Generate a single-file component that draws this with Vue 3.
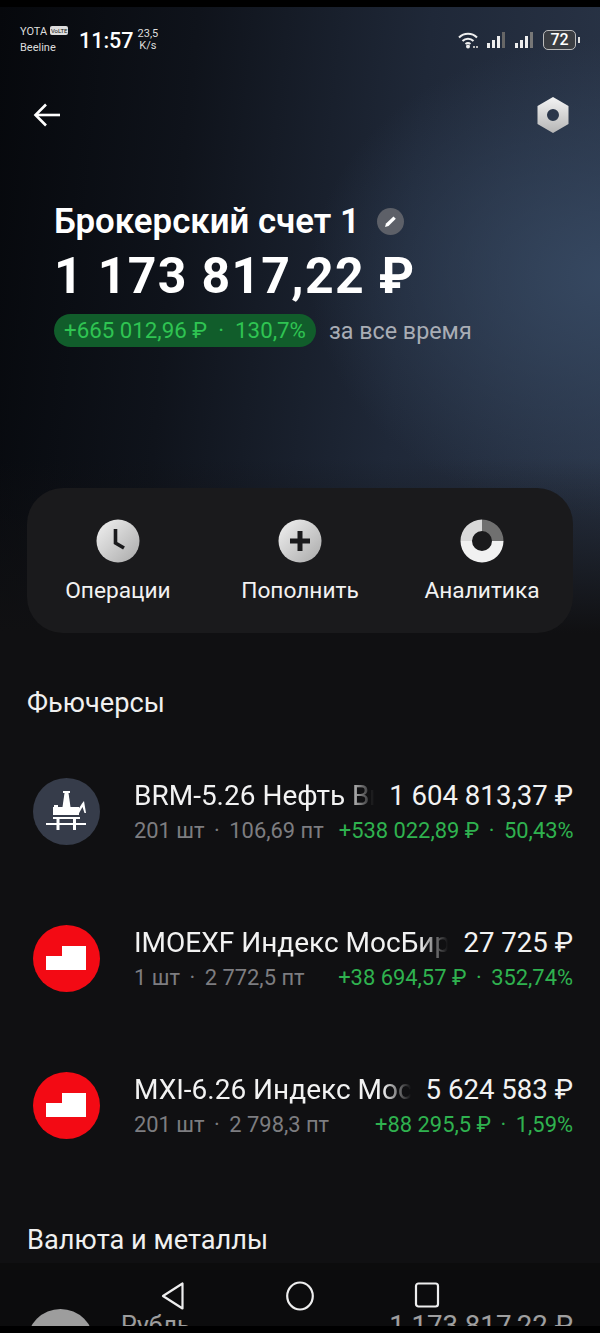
<script setup>
const actions = [
  { id: 'ops', label: 'Операции' },
  { id: 'add', label: 'Пополнить' },
  { id: 'stats', label: 'Аналитика' }
]

const futures = [
  { id: 'brm', logo: 'oil', name: 'BRM-5.26 Нефть Brent', price: '1 604 813,37 ₽', qty: '201 шт', pt: '106,69 пт', gain: '+538 022,89 ₽', pct: '50,43%' },
  { id: 'imo', logo: 'moex', name: 'IMOEXF Индекс МосБиржи', price: '27 725 ₽', qty: '1 шт', pt: '2 772,5 пт', gain: '+38 694,57 ₽', pct: '352,74%' },
  { id: 'mxi', logo: 'moex', name: 'MXI-6.26 Индекс МосБиржи', price: '5 624 583 ₽', qty: '201 шт', pt: '2 798,3 пт', gain: '+88 295,5 ₽', pct: '1,59%' }
]
</script>

<template>
  <div class="screen">
    <div class="hero">
      <div class="status">
        <div class="carriers">
          <div class="carrier-top">YOTA <span class="volte">VoLTE</span></div>
          <div>Beeline</div>
        </div>
        <span class="clock">11:57</span>
        <div class="speed"><span>23,5</span><span>K/s</span></div>
        <div class="status-right">
          <svg width="24" height="20" viewBox="0 0 24 20" fill="none" stroke="#eee" stroke-width="2">
            <path d="M2 7.500C7 2.500 15 2.500 20 7.500" />
            <path d="M5.500 11C8.500 8 13.500 8 16.500 11" />
            <path d="M8.500 14C10 12.800 12 12.800 13.500 14" />
            <circle cx="11" cy="16.500" r="2" fill="#eee" stroke="none" />
            <rect x="16" y="16" width="2" height="2" fill="#bbb" stroke="none" />
            <rect x="19" y="16" width="2" height="2" fill="#bbb" stroke="none" />
          </svg>
          <svg class="bars" width="22" height="18" viewBox="0 0 22 18">
            <rect x="0" y="12" width="3" height="5" fill="#eee" />
            <rect x="5" y="9" width="3" height="8" fill="#eee" />
            <rect x="10" y="5" width="3" height="12" fill="#eee" />
            <rect x="15" y="1" width="3" height="16" fill="#666" />
          </svg>
          <svg class="bars" width="22" height="18" viewBox="0 0 22 18">
            <rect x="0" y="12" width="3" height="5" fill="#eee" />
            <rect x="5" y="9" width="3" height="8" fill="#eee" />
            <rect x="10" y="5" width="3" height="12" fill="#eee" />
            <rect x="15" y="1" width="3" height="16" fill="#777" />
          </svg>
          <div class="battery"><span>72</span></div>
          <i class="battery-tip"></i>
        </div>
      </div>

      <div class="topbar">
        <svg width="30" height="30" viewBox="0 0 30 30" fill="none" stroke="#fff" stroke-width="2.600">
          <path d="M30 15H6" />
          <path d="M16 4.500L5.500 15L16 25.500" />
        </svg>
        <svg width="34" height="38" viewBox="0 0 34 38">
          <defs>
            <linearGradient id="nut" x1="0" y1="0" x2="0" y2="1">
              <stop offset="0" stop-color="#f4f4f4" />
              <stop offset="1" stop-color="#b5b5b5" />
            </linearGradient>
          </defs>
          <path fill="url(#nut)" fill-rule="evenodd" d="M17 1L32.500 10V28L17 37L1.500 28V10ZM17 13A6 6 0 1 0 17 25A6 6 0 1 0 17 13Z" />
        </svg>
      </div>

      <div class="account">
        <div class="account-name">
          <span>Брокерский счет 1</span>
          <svg width="27" height="27" viewBox="0 0 27 27">
            <circle cx="13.500" cy="13.500" r="13.500" fill="#5d6068" />
            <path d="M8 19L9 15.500L16.500 8.500L18.800 10.800L11.500 18Z" fill="#fff" />
          </svg>
        </div>
        <div class="account-total">1 173 817,22 ₽</div>
        <div class="account-gain">
          <span class="gain-pill">+665 012,96 ₽ &nbsp;·&nbsp; 130,7%</span>
          <span class="gain-period">за все время</span>
        </div>
      </div>

      <div class="actions">
        <div v-for="action in actions" :key="action.id" class="action">
          <svg v-if="action.id === 'ops'" width="44" height="44" viewBox="0 0 44 44">
            <defs>
              <linearGradient id="disc" x1="0" y1="0" x2="1" y2="1">
                <stop offset="0" stop-color="#f2f2f2" />
                <stop offset="1" stop-color="#a9a9a9" />
              </linearGradient>
            </defs>
            <circle cx="22" cy="22" r="21.500" fill="url(#disc)" />
            <path d="M19.500 10V24L28 29" fill="none" stroke="#1a1a1c" stroke-width="3.600" />
          </svg>
          <svg v-else-if="action.id === 'add'" width="44" height="44" viewBox="0 0 44 44">
            <circle cx="22" cy="22" r="21.500" fill="url(#disc)" />
            <path d="M22 12V32M12 22H32" fill="none" stroke="#1a1a1c" stroke-width="5" />
          </svg>
          <svg v-else width="44" height="44" viewBox="0 0 44 44">
            <path d="M22 0.500A21.500 21.500 0 0 1 43.500 22H32A10 10 0 0 0 22 12Z" fill="#707070" />
            <path d="M22 0.500V12A10 10 0 0 0 12 22H0.500A21.500 21.500 0 0 1 22 0.500Z" fill="#d9d9d9" />
            <path d="M0.500 22H12A10 10 0 0 0 32 22H43.500A21.500 21.500 0 0 1 0.500 22Z" fill="#f1f1f1" />
          </svg>
          <span>{{ action.label }}</span>
        </div>
      </div>
    </div>

    <h2 class="section-title futures-title">Фьючерсы</h2>
    <div class="list">
      <div v-for="item in futures" :key="item.id" class="row">
        <svg v-if="item.logo === 'oil'" class="logo" width="67" height="67" viewBox="0 0 67 67">
          <circle cx="33.500" cy="33.500" r="33.500" fill="#363c4a" />
          <g fill="#fff">
            <rect x="30" y="13" width="7" height="2" />
            <path d="M31.500 15H35.500L37.500 29H29.500Z" />
            <rect x="20" y="29" width="26" height="8" />
            <rect x="21" y="27" width="4" height="2" />
            <path d="M43 35L49 25.500L51 23L53 35H51.500L49.500 29L45 37Z" />
            <rect x="13" y="45" width="40" height="2" />
            <rect x="23.500" y="40" width="3" height="12" />
            <rect x="40" y="40" width="3" height="12" />
            <rect x="20" y="39" width="27" height="2" />
          </g>
        </svg>
        <svg v-else class="logo" width="67" height="67" viewBox="0 0 67 67">
          <circle cx="33.500" cy="33.500" r="33.500" fill="#f30a14" />
          <path d="M13 31H29V21H53V45H13Z" fill="#fff" />
        </svg>
        <div class="row-body">
          <div class="row-line">
            <div class="row-name">{{ item.name }}</div>
            <div class="row-price">{{ item.price }}</div>
          </div>
          <div class="row-line sub">
            <div class="row-qty">{{ item.qty }}<span class="dot">·</span>{{ item.pt }}</div>
            <div class="row-gain">{{ item.gain }}<span class="dot">·</span>{{ item.pct }}</div>
          </div>
        </div>
      </div>
    </div>

    <h2 class="section-title metals-title">Валюта и металлы</h2>
    <div class="row rub-row">
      <div class="rub-logo"></div>
      <div class="row-body rub-body">
        <div class="row-line">
          <div class="row-name rub-name">Рубль</div>
          <div class="row-price rub-price">1 173 817,22 ₽</div>
        </div>
      </div>
    </div>

    <div class="navbar">
      <svg width="26" height="30" viewBox="0 0 26 30" fill="none" stroke="#eee" stroke-width="2.200" stroke-linejoin="round">
        <path d="M22.500 2.500V27.500L3 15Z" />
      </svg>
      <svg width="30" height="30" viewBox="0 0 30 30" fill="none" stroke="#eee" stroke-width="2.200">
        <ellipse cx="15" cy="15" rx="12.800" ry="13.500" />
      </svg>
      <svg width="26" height="28" viewBox="0 0 26 28" fill="none" stroke="#eee" stroke-width="2.200">
        <rect x="2" y="2.500" width="22" height="23" rx="2.500" />
      </svg>
    </div>
    <div class="bottom-strip"></div>
  </div>
</template>

<style scoped>
.screen {
  position: relative;
  width: 600px;
  height: 1333px;
  overflow: hidden;
  background: #101012;
  color: #fff;
  font-family: Roboto, "Noto Sans", sans-serif;
}

.hero {
  border-top: 7px solid #000;
  background:
    linear-gradient(180deg, rgba(16, 16, 18, 0) 72%, #101012 100%),
    radial-gradient(ellipse 300px 240px at 610px 270px, #364861 0%, rgba(54, 72, 97, 0) 100%),
    linear-gradient(96deg, #06080c 0%, #0f131b 30%, #1f2838 65%, #2a3548 100%);
}

.status {
  display: flex;
  align-items: center;
  height: 66px;
  padding: 0 20px;
}

.carriers {
  font-size: 11px;
  line-height: 16px;
  color: #ddd;
  width: 59px;
}

.carrier-top {
  white-space: nowrap;
}

.volte {
  display: inline-block;
  font-size: 6px;
  line-height: 9px;
  padding: 0 1px;
  background: #ddd;
  color: #111;
  border-radius: 2px;
  vertical-align: 2px;
}

.clock {
  font-size: 21.500px;
  font-weight: 500;
}

.speed {
  display: flex;
  flex-direction: column;
  margin-left: 4px;
  font-size: 11px;
  line-height: 12px;
  text-align: center;
  color: #ddd;
}

.status-right {
  display: flex;
  align-items: center;
  margin-left: auto;
  gap: 6px;
}

.battery {
  width: 33px;
  height: 20px;
  box-sizing: border-box;
  border: 1.500px solid #bbb;
  border-radius: 5px;
  background: #3a3d42;
  font-size: 16px;
  font-weight: 500;
  line-height: 17px;
  text-align: center;
}

.battery-tip {
  width: 2px;
  height: 6px;
  background: #ddd;
  margin-left: -4px;
}

.topbar {
  display: flex;
  align-items: center;
  justify-content: space-between;
  padding: 23px 30px 0 30px;
  height: 38px;
}

.account {
  padding: 67px 54px 0;
}

.account-name {
  display: flex;
  align-items: center;
  gap: 17px;
  font-size: 34.800px;
  font-weight: 600;
  line-height: 40px;
}

.account-total {
  margin-top: 7px;
  font-size: 50px;
  font-weight: 700;
  line-height: 56px;
  letter-spacing: 1.300px;
}

.account-gain {
  display: flex;
  align-items: center;
  gap: 13px;
  margin-top: 10px;
}

.gain-pill {
  height: 33px;
  padding: 0 10px;
  border-radius: 17px;
  background: #115d2b;
  color: #2fc452;
  font-size: 22.300px;
  line-height: 33px;
  white-space: nowrap;
}

.gain-period {
  font-size: 23.300px;
  color: #a9adb5;
}

.actions {
  display: grid;
  grid-template-columns: 1fr 1fr 1fr;
  margin: 141px 27px 0;
  height: 145px;
  border-radius: 36px;
  background: #1a1a1c;
}

.action {
  display: flex;
  flex-direction: column;
  align-items: center;
  padding-top: 31px;
  font-size: 22.700px;
  color: #f2f2f2;
}

.action span {
  margin-top: 13px;
  line-height: 30px;
  white-space: nowrap;
}

.section-title {
  margin: 0;
  padding-left: 27px;
  font-size: 27.200px;
  font-weight: 400;
  line-height: 32px;
  color: #f0f0f0;
}

.futures-title {
  margin-top: 54px;
}

.list {
  display: flex;
  flex-direction: column;
  gap: 80px;
  margin-top: 59px;
}

.row {
  display: flex;
  align-items: center;
  gap: 34px;
  padding: 0 27px 0 33px;
  height: 67px;
}

.logo {
  flex: none;
}

.row-body {
  flex: 1;
  min-width: 0;
}

.row-line {
  display: flex;
  justify-content: space-between;
  gap: 15px;
}

.row-name {
  flex: 1;
  min-width: 0;
  overflow: hidden;
  white-space: nowrap;
  font-size: 28px;
  line-height: 34px;
  color: #f2f2f2;
  -webkit-mask-image: linear-gradient(90deg, #000 calc(100% - 28px), transparent);
  mask-image: linear-gradient(90deg, #000 calc(100% - 28px), transparent);
}

.row-price {
  flex: none;
  font-size: 27.600px;
  line-height: 34px;
  white-space: nowrap;
  color: #f2f2f2;
}

.sub {
  margin-top: 4px;
  font-size: 21.900px;
  line-height: 28px;
}

.dot {
  margin: 0 9.500px;
}

.row-qty {
  color: #7d7d80;
  white-space: nowrap;
}

.row-gain {
  color: #2fb24f;
  white-space: nowrap;
}

.metals-title {
  margin-top: 85px;
}

.rub-row {
  margin-top: 53px;
  gap: 27px;
  padding-left: 27px;
}

.rub-logo {
  flex: none;
  width: 67px;
  height: 67px;
  border-radius: 50%;
  background: #eee;
}

.rub-body {
  align-self: flex-start;
}

.rub-name {
  font-size: 25px;
  color: #eee;
  -webkit-mask-image: none;
  mask-image: none;
}

.rub-price {
  color: #f2f2f2;
}

.navbar {
  position: absolute;
  left: 0;
  right: 0;
  bottom: 7px;
  height: 63px;
  display: flex;
  align-items: flex-start;
  justify-content: center;
  gap: 99px;
  padding-top: 18px;
  box-sizing: border-box;
  background: rgba(5, 5, 6, 0.35);
}

.bottom-strip {
  position: absolute;
  left: 0;
  right: 0;
  bottom: 0;
  height: 7px;
  background: #000;
}
</style>
